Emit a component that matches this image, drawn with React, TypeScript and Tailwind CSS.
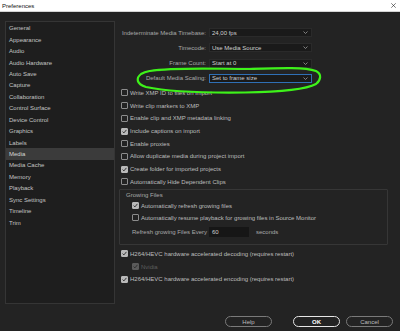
import React from 'react'

const categories = [
  'General', 'Appearance', 'Audio', 'Audio Hardware', 'Auto Save', 'Capture',
  'Collaboration', 'Control Surface', 'Device Control', 'Graphics', 'Labels',
  'Media', 'Media Cache', 'Memory', 'Playback', 'Sync Settings', 'Timeline', 'Trim'
]

const fields = [
  { label: 'Indeterminate Media Timebase:', value: '24,00 fps' },
  { label: 'Timecode:', value: 'Use Media Source' },
  { label: 'Frame Count:', value: 'Start at 0' },
  { label: 'Default Media Scaling:', value: 'Set to frame size', focused: true }
]

const options = [
  { label: 'Write XMP ID to files on import', checked: false },
  { label: 'Write clip markers to XMP', checked: false },
  { label: 'Enable clip and XMP metadata linking', checked: false },
  { label: 'Include captions on import', checked: true },
  { label: 'Enable proxies', checked: false },
  { label: 'Allow duplicate media during project import', checked: false },
  { label: 'Create folder for imported projects', checked: true },
  { label: 'Automatically Hide Dependent Clips', checked: false }
]

function Chevron() {
  return (
    <svg width="5" height="3" viewBox="0 0 5 3" className="shrink-0">
      <polyline points="0.5,0.5 2.5,2.5 4.5,0.5" fill="none" stroke="#9a9a9a" strokeWidth="0.8" />
    </svg>
  )
}

function Checkbox({ checked, disabled }: { checked: boolean; disabled?: boolean }) {
  return (
    <span
      className={
        checked
          ? disabled
            ? 'w-[7px] h-[7px] shrink-0 rounded-[1px] bg-[#5a5a5a] border border-[#5a5a5a] flex items-center justify-center'
            : 'w-[7px] h-[7px] shrink-0 rounded-[1px] bg-[#b9b9b9] border border-[#b9b9b9] flex items-center justify-center'
          : 'w-[7px] h-[7px] shrink-0 rounded-[1px] border border-[#8c8c8c]'
      }
    >
      {checked && (
        <svg width="5" height="5" viewBox="0 0 5 5">
          <polyline
            points="0.6,2.6 1.9,3.9 4.4,0.9"
            fill="none"
            stroke={disabled ? '#2a2a2a' : '#262626'}
            strokeWidth="0.9"
          />
        </svg>
      )}
    </span>
  )
}

function CheckRow({ label, checked, disabled, className }: { label: string; checked: boolean; disabled?: boolean; className?: string }) {
  return (
    <div className={`flex items-center gap-[2px] ${className ?? 'h-[12.7px]'}`}>
      <Checkbox checked={checked} disabled={disabled} />
      <span className={disabled ? 'text-[#5e5e5e]' : 'text-[#bdbdbd]'}>{label}</span>
    </div>
  )
}

function PillButton({ label, primary }: { label: string; primary?: boolean }) {
  return (
    <button
      className={
        primary
          ? 'w-[47px] h-[11px] rounded-full border border-[#e6e6e6] text-white font-bold text-[6px] flex items-center justify-center'
          : 'w-[47px] h-[11px] rounded-full border border-[#7a7a7a] text-[#bdbdbd] text-[6px] flex items-center justify-center'
      }
    >
      {label}
    </button>
  )
}

export default function App() {
  return (
    <div
      className="relative w-[400px] h-[331px] bg-[#232323] flex flex-col overflow-hidden text-[6px] leading-none"
      style={{ fontFamily: '"Liberation Sans", Arial, sans-serif' }}
    >
      <div className="h-[12px] shrink-0 bg-white border-b border-[#d4d4d4] flex items-center justify-between pl-[2px] pr-[4px]">
        <span className="text-[#111]">Preferences</span>
        <svg width="5" height="5" viewBox="0 0 5 5">
          <path d="M0.3 0.3 L4.7 4.7 M4.7 0.3 L0.3 4.7" stroke="#222" strokeWidth="0.6" />
        </svg>
      </div>

      <div className="flex h-[292px] shrink-0">
        <div className="ml-[5px] mt-[9px] w-[110px] h-[283px] bg-[#1e1e1e] border border-[#353535] pt-[0.5px]">
          {categories.map((c) => (
            <div
              key={c}
              className={
                c === 'Media'
                  ? 'h-[11.45px] flex items-center pl-[3px] bg-[#3b3b3b] text-[#d6d6d6]'
                  : 'h-[11.45px] flex items-center pl-[3px] text-[#c4c4c4]'
              }
            >
              {c}
            </div>
          ))}
        </div>

        <div className="ml-[6px] flex flex-col">
          <div className="mt-[16px] flex flex-col gap-[6.33px]">
            {fields.map((f) => (
              <div key={f.label} className="flex items-center h-[9px]">
                <span className="w-[85px] text-right text-[#a9a9a9]">{f.label}</span>
                <div
                  className={
                    f.focused
                      ? 'ml-[3px] w-[103px] h-[9px] bg-[#1a1a1a] border border-[#2f6fb5] flex items-center justify-between pl-[2px] pr-[3px] text-[#cfcfcf]'
                      : 'ml-[3px] w-[103px] h-[9px] bg-[#1a1a1a] border border-[#2a2a2a] flex items-center justify-between pl-[2px] pr-[3px] text-[#cfcfcf]'
                  }
                >
                  <span>{f.value}</span>
                  <Chevron />
                </div>
              </div>
            ))}
          </div>

          <div className="mt-[3.65px] flex flex-col">
            {options.map((o) => (
              <CheckRow key={o.label} label={o.label} checked={o.checked} />
            ))}
          </div>

          <div className="mt-[0.75px] -ml-[2px] w-[269px] h-[56px] border border-[#363636] rounded-[1px] flex flex-col pl-[6px]">
            <div className="h-[10px] flex items-center text-[#a9a9a9]">Growing Files</div>
            <div className="pl-[6px] flex flex-col">
              <CheckRow label="Automatically refresh growing files" checked className="h-[12px]" />
              <CheckRow label="Automatically resume playback for growing files in Source Monitor" checked={false} className="h-[12px]" />
              <div className="h-[16px] flex items-center">
                <span className="w-[77px] text-[#a9a9a9]">Refresh growing Files Every</span>
                <div className="w-[40px] h-[10px] bg-[#161616] flex items-center pl-[3px] text-[#cfcfcf]">60</div>
                <span className="ml-[7px] text-[#a9a9a9]">seconds</span>
              </div>
            </div>
          </div>

          <div className="mt-[2.7px] flex flex-col">
            <CheckRow label="H264/HEVC hardware accelerated decoding (requires restart)" checked />
            <div className="pl-[11px]">
              <CheckRow label="Nvidia" checked disabled />
            </div>
            <CheckRow label="H264/HEVC hardware accelerated encoding (requires restart)" checked />
          </div>
        </div>
      </div>

      <div className="mt-[12px] h-[11px] flex items-center justify-end pr-[7px]">
        <PillButton label="Help" />
        <div className="ml-[21px] flex gap-[6px]">
          <PillButton label="OK" primary />
          <PillButton label="Cancel" />
        </div>
      </div>

      <svg className="absolute left-0 top-0 pointer-events-none" width="400" height="331" viewBox="0 0 400 331">
        <path
          d="M150 71 C175 67 215 69 250 69 C280 68 305 67 316 71 C322 74 321 80 316 84 C305 90 275 92 245 92.5 C205 93 165 91 146 87 C136 84 136 78 141 74 C146 71 155 70 162 70"
          fill="none"
          stroke="#3ef21a"
          strokeWidth="2.2"
          strokeLinecap="round"
        />
      </svg>
    </div>
  )
}
